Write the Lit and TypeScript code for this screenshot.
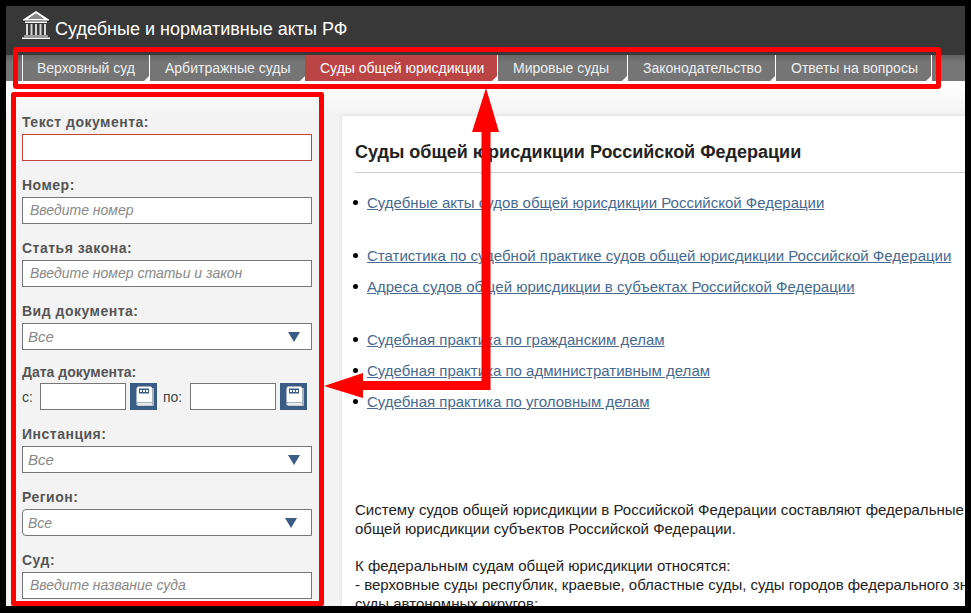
import { LitElement, html, css, svg } from "lit";
import { customElement } from "lit/decorators.js";

const tabs = ["Верховный суд", "Арбитражные суды", "Суды общей юрисдикции", "Мировые суды", "Законодательство", "Ответы на вопросы"];
const widths = [127, 156, 192, 130, 148, 156];

@customElement("app-root")
export class AppRoot extends LitElement {
  static styles = css`
    :host { display: block; position: relative; width: 971px; height: 613px; box-sizing: border-box; background: #000; padding: 6px; overflow: hidden; font-family: "Liberation Sans", Arial, sans-serif; }
    .page { width: 959px; height: 600px; background: #f3f3f3; overflow: hidden; display: flex; flex-direction: column; }
    .head { height: 49px; flex: none; background: #383838; display: flex; align-items: center; padding-left: 16px; gap: 5px; color: #fff; font-size: 18px; }
    .head svg { display: block; margin-bottom: 11px; }
    .head span { margin-top: -2px; }
    .nav { height: 26px; flex: none; background: linear-gradient(#606060, #767676 30%); display: flex; padding-left: 16px; }
    .tab { position: relative; box-sizing: border-box; height: 26px; border-left: 1px solid #fff; background: linear-gradient(#666, #757575 30%); color: #eee; font-size: 14px; line-height: 26px; padding-left: 15px; white-space: nowrap; }
    .tab:first-child { padding-left: 14px; }
    .tab.on { background: #bb4444; border-left-color: #bb4444; color: #fff; padding-left: 14px; }
    .tab::after { content: ""; position: absolute; right: 0; bottom: 0; border-style: solid; border-width: 0 0 5px 5px; border-color: transparent transparent #f3f3f3 transparent; }
    .last { width: 1px; height: 26px; background: #fff; }
    .main { flex: 1; display: flex; min-height: 0; background: linear-gradient(#fff, #f3f3f3 35px); }
    .side { width: 336px; flex: none; box-sizing: border-box; padding: 32px 0 0 16px; }
    .field { width: 290px; margin-bottom: 15px; }
    .field.tight { margin-bottom: 13px; }
    label { display: block; font-weight: bold; font-size: 14px; line-height: 18px; color: #555; margin-bottom: 3px; letter-spacing: 0.5px; }
    .date label { margin-bottom: 2px; letter-spacing: 0; }
    .inp { box-sizing: border-box; height: 27px; background: #fff; border: 1px solid #777; display: flex; align-items: center; justify-content: space-between; font-style: italic; font-size: 14px; color: #888; padding: 0 10px 2px 7px; }
    .inp.err { border-color: #c0443e; }
    .inp.sel { font-size: 15px; padding: 0 11px 0 5px; }
    .inp.rnd { border-radius: 4px 0 0 4px; font-size: 14px; padding-right: 14px; }
    .tri { width: 0; height: 0; border-style: solid; border-width: 10px 6.5px 0; border-color: #3b5d85 transparent transparent; }
    .row { display: flex; align-items: center; font-size: 14px; color: #444; width: 300px; }
    .row .d { box-sizing: border-box; width: 86px; height: 27px; flex: none; background: #fff; border: 1px solid #777; }
    .s { width: 18px; flex: none; }
    .p { width: 27px; flex: none; padding-left: 1px; }
    .cal { display: block; flex: none; margin: 0 5px 0 4px; }
    .card { flex: 1; min-width: 0; margin: 35px 0 0 0; background: #fff; box-shadow: 0 0 4px rgba(0,0,0,.12); padding: 0 0 0 13px; overflow: hidden; }
    h2 { margin: 0; font-size: 18px; line-height: 22px; padding: 25px 0 9px; color: #222; border-bottom: 1px solid #ccc; white-space: nowrap; }
    ul { margin: 0; padding: 21px 0 0 12px; list-style: none; font-size: 15px; line-height: 17px; }
    li { position: relative; margin-bottom: 14px; }
    li::before { content: ""; position: absolute; left: -14px; top: 6px; width: 5px; height: 5px; border-radius: 50%; background: #000; }
    li.gap { margin-bottom: 36px; }
    a { color: #466a8f; text-decoration: underline; white-space: nowrap; }
    .txt { margin: 0; font-size: 15px; line-height: 18.7px; color: #222; white-space: nowrap; padding-top: 77px; }
    .over { position: absolute; left: 0; top: 0; pointer-events: none; }
  `;

  private cal() {
    return html`<svg class="cal" width="27" height="27" viewBox="0 0 27 27">
      <rect width="27" height="27" fill="#3b5d85"/>
      <path d="M9 5H24V23H8Z" fill="#a9b3bd"/>
      <path d="M8 3.500H21L22 5V19H9Q6.500 19 6.500 21V6Q6.500 4 8 3.500Z" fill="#fff"/>
      <path d="M8 20H22V22.500H8Q6 22.500 6.500 21Q6.500 20 8 20Z" fill="#e6e8ea"/>
      <rect x="9" y="5.500" width="10" height="5" fill="#3b5d85"/>
      <path d="M10 7h2v2h-2zM13 7h2v2h-2zM16 7h2v2h-2z" fill="#fff"/>
    </svg>`;
  }

  render() {
    return html`
      <div class="page">
        <div class="head">
          <svg width="28" height="28" viewBox="0 0 28 28" fill="#fff">
            <path d="M14 0 27 8.500V9.500H1V8.500ZM14 2.500 6 8H22Z" fill-rule="evenodd"/>
            <path d="M14 2.500 6 8H22Z" fill="#8a8a8a"/>
            <path d="M3 10.500H25V12H3Z"/>
            <path d="M4 13H6V24H4ZM8.500 13H10.500V24H8.500ZM13 13H15V24H13ZM17.500 13H19.500V24H17.500ZM22 13H24V24H22Z" fill="#d8d8d8"/>
            <path d="M2 24.500H26V25.500H2ZM0 26.500H28V28H0Z"/>
          </svg>
          <span>Судебные и нормативные акты РФ</span>
        </div>
        <div class="nav">
          ${tabs.map((t, i) => html`<div class="tab ${i === 2 ? "on" : ""}" style="width:${widths[i]}px">${t}</div>`)}
          <div class="last"></div>
        </div>
        <div class="main">
          <div class="side">
            <div class="field"><label>Текст документа:</label><div class="inp err"></div></div>
            <div class="field"><label>Номер:</label><div class="inp">Введите номер</div></div>
            <div class="field"><label>Статья закона:</label><div class="inp">Введите номер статьи и закон</div></div>
            <div class="field tight"><label>Вид документа:</label><div class="inp sel">Все<i class="tri"></i></div></div>
            <div class="field date"><label>Дата документа:</label>
              <div class="row"><span class="s">с:</span><div class="d"></div>${this.cal()}<span class="p">по:</span><div class="d"></div>${this.cal()}</div>
            </div>
            <div class="field"><label>Инстанция:</label><div class="inp sel">Все<i class="tri"></i></div></div>
            <div class="field"><label>Регион:</label><div class="inp sel rnd">Все<i class="tri"></i></div></div>
            <div class="field"><label>Суд:</label><div class="inp">Введите название суда</div></div>
          </div>
          <div class="card">
            <h2>Суды общей юрисдикции Российской Федерации</h2>
            <ul>
              <li class="gap"><a>Судебные акты судов общей юрисдикции Российской Федерации</a></li>
              <li><a>Статистика по судебной практике судов общей юрисдикции Российской Федерации</a></li>
              <li class="gap"><a>Адреса судов общей юрисдикции в субъектах Российской Федерации</a></li>
              <li><a>Судебная практика по гражданским делам</a></li>
              <li><a>Судебная практика по административным делам</a></li>
              <li><a>Судебная практика по уголовным делам</a></li>
            </ul>
            <p class="txt">Систему судов общей юрисдикции в Российской Федерации составляют федеральные суды<br>общей юрисдикции субъектов Российской Федерации.<br><br>К федеральным судам общей юрисдикции относятся:<br>- верховные суды республик, краевые, областные суды, суды городов федерального значения,<br>суды автономных округов;</p>
          </div>
        </div>
      </div>
      <svg class="over" width="971" height="613" viewBox="0 0 971 613">
        ${svg`<rect x="15.5" y="49.500" width="923" height="37" rx="1" fill="none" stroke="#f00" stroke-width="5"/>
        <path d="M13.500 94.500H321.500V603.500H13.500Z" fill="none" stroke="#f00" stroke-width="5" stroke-linejoin="round"/>
        <path d="M486 88 499 132H490.500V390H363V398L324 386 363 373V381H481.500V132H472Z" fill="#f00"/>`}
      </svg>
    `;
  }
}
